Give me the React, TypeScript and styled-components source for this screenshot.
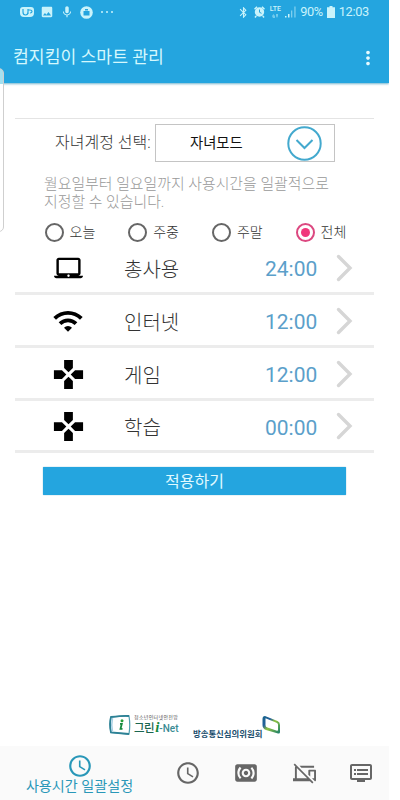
import React from 'react';
import styled, { createGlobalStyle } from 'styled-components';
import {
  MdAccessTime, MdBluetooth, MdDvr, MdGamepad, MdImage, MdLaptopMac, MdMic,
  MdMoreVert, MdPhonelinkOff, MdSurroundSound, MdWifi,
} from 'react-icons/md';

const BLUE = '#24a5df';

const GlobalStyle = createGlobalStyle`
  * { box-sizing: border-box; }
  body { margin: 0; background: #fff; font-family: Roboto, "Noto Sans CJK KR", sans-serif; }
  svg { display: block; flex: none; }
`;

const Page = styled.div`
  position: relative;
  width: 389px;
  height: 800px;
  display: flex;
  flex-direction: column;
  overflow: hidden;
  background: #fff;
`;

const Label = styled.span<{ $size: number; $color: string; $spacing?: number; $weight?: number; $width?: number }>`
  font-size: ${(p) => p.$size}px;
  color: ${(p) => p.$color};
  letter-spacing: ${(p) => p.$spacing ?? 0}px;
  font-weight: ${(p) => p.$weight ?? 400};
  width: ${(p) => (p.$width ? `${p.$width}px` : 'auto')};
  line-height: 1;
  white-space: nowrap;
`;

const Header = styled.header`
  height: 83px;
  flex: none;
  background: ${BLUE};
  box-shadow: 0 1px 2px rgba(40, 140, 180, 0.65);
`;

const StatusBar = styled.div`
  height: 24px;
  display: flex;
  justify-content: space-between;
  padding: 0 20px;
  color: #c9f3fb;
`;

const StatusGroup = styled.div<{ $gap: number }>`
  display: flex;
  align-items: center;
  gap: ${(p) => p.$gap}px;
`;

const NetworkType = styled.div`
  display: flex;
  flex-direction: column;
  align-items: center;
  gap: 1px;
  width: 12px;
`;

const AppBar = styled.div`
  height: 66px;
  display: flex;
  align-items: center;
  justify-content: space-between;
  padding: 2px 10px 0 13px;
`;

const EdgeHandle = styled.div`
  position: absolute;
  left: -6px;
  top: 68px;
  width: 10px;
  height: 164px;
  border: 1px solid #cfcfcf;
  border-radius: 0 5px 5px 0;
  background: linear-gradient(#a5e0ef 0 15px, #fff 15px);
`;

const Content = styled.main`
  flex: 1;
  display: flex;
  flex-direction: column;
  padding: 35px 15px 0;
`;

const Divider = styled.div`
  height: 1px;
  flex: none;
  background: #e4e4e4;
`;

const AccountRow = styled.div`
  display: flex;
  align-items: center;
  height: 38px;
  margin-top: 5px;
  padding-left: 40px;
`;

const Select = styled.button`
  width: 180px;
  height: 38px;
  display: flex;
  align-items: center;
  justify-content: space-between;
  padding: 0 12px 0 34px;
  border: 1px solid #c4c4c4;
  background: #fff;
  font-family: inherit;
`;

const Description = styled.p`
  margin: 13px 0 0 29px;
  height: 36px;
  display: flex;
  flex-direction: column;
  justify-content: space-around;
`;

const RadioGroup = styled.div`
  display: grid;
  grid-template-columns: repeat(4, 83.7px);
  margin: 11px 0 0 29.5px;
  height: 20px;
`;

const RadioItem = styled.div`
  display: flex;
  align-items: center;
  gap: 6px;
`;

const RadioMark = styled.span<{ $on: boolean }>`
  width: 19px;
  height: 19px;
  flex: none;
  border: 2px solid ${(p) => (p.$on ? '#dc4880' : '#666')};
  border-radius: 50%;
  padding: 3px;
  background: ${(p) => (p.$on ? '#f0387c' : '#fff')} content-box;
`;

const UsageList = styled.div`
  display: grid;
  grid-template-rows: 53px 53px 53px 52px;
`;

const UsageRow = styled.div`
  display: grid;
  grid-template-columns: 74px 1fr 53px 56px;
  align-items: center;
  padding: 5px 0 0 35px;
  border-bottom: 3px solid #ececec;
`;

const IconSlot = styled.div`
  width: 36px;
  display: flex;
  justify-content: center;
  margin-top: -3px;
`;

const ArrowSlot = styled.div`
  display: flex;
  padding-left: 17px;
  margin-top: -4px;
`;

const ApplyButton = styled.button`
  width: 303px;
  height: 28px;
  margin: 14px 0 0 28px;
  padding: 2px 0 0;
  border: 0;
  border-radius: 1px;
  box-shadow: 0 0 1px #1780ae;
  background: ${BLUE};
  font-family: inherit;
`;

const Sponsors = styled.footer`
  display: flex;
  height: 24px;
  margin: auto 0 8px 93px;
`;

const GreenText = styled.div`
  display: flex;
  flex-direction: column;
  gap: 1px;
  width: 47px;
  margin: 1px 0 0 3px;
`;

const GreenName = styled.div`
  display: flex;
  align-items: baseline;
  white-space: nowrap;
`;

const Italic = styled.i`
  font: italic 700 15px/12px "Liberation Serif", serif;
  color: #16883e;
  margin-left: 1px;
`;

const Commission = styled.div`
  display: grid;
  grid-template-columns: 68px 19px;
  margin-left: 12px;
  align-items: end;
`;

const CommissionMark = styled.div`
  margin: 0 0 3px 1px;
`;

const BottomNav = styled.nav`
  height: 54px;
  flex: none;
  display: grid;
  grid-template-columns: 159px 58px 58px 58px 56px;
  background: #fafafa;
  color: #666;
`;

const NavItem = styled.div<{ $active?: boolean }>`
  display: flex;
  flex-direction: column;
  align-items: center;
  justify-content: ${(p) => (p.$active ? 'flex-start' : 'center')};
  padding-top: ${(p) => (p.$active ? 7 : 0)}px;
  color: ${(p) => (p.$active ? '#2997b8' : '#666')};
`;

const usage = [
  { name: '총사용', time: '24:00', icon: <MdLaptopMac size={29} /> },
  { name: '인터넷', time: '12:00', icon: <MdWifi size={32} /> },
  { name: '게임', time: '12:00', icon: <MdGamepad size={35} /> },
  { name: '학습', time: '00:00', icon: <MdGamepad size={35} /> },
];

const BadgeIcon = () => (
  <svg width="14" height="12" viewBox="0 0 14 12">
    <path d="M3 1h8q3 0 3 3v3q0 4-4 4H4q-4 0-4-4V4q0-3 3-3Z" fill="currentColor" />
    <path d="M3 3v3q0 3 2.5 3T8 6V3M8 8V4h2q2 0 2 1.5T10 7" fill="none" stroke={BLUE} strokeWidth="1.2" />
  </svg>
);

const RobotIcon = () => (
  <svg width="13" height="13" viewBox="0 0 13 13">
    <circle cx="6.5" cy="6.5" r="6.3" fill="currentColor" />
    <path d="M3.5 5h6v4.5h-6zM5 4.5V3h3v1.5" fill={BLUE} />
  </svg>
);

const AlarmIcon = () => (
  <svg width="11" height="12" viewBox="0 0 11 12">
    <path d="M.5 3.2 3 .8M10.5 3.2 8 .8M2.2 10 1 11.5M8.8 10l1.2 1.5" stroke="currentColor" strokeWidth="1.5" />
    <circle cx="5.5" cy="6" r="4.7" fill="currentColor" />
    <path d="M5.5 3.5v2.8l2 1" stroke={BLUE} fill="none" />
  </svg>
);

const SignalIcon = () => (
  <svg width="11" height="12" viewBox="0 0 11 12" fill="currentColor">
    <path d="M0 10h1.5v1.5H0zM3 8h1.5v3.5H3z" />
    <path d="M6 4.5h1.3v7H6zM9.3.5h1.3v11H9.3z" opacity=".55" />
  </svg>
);

const BatteryIcon = () => (
  <svg width="8" height="12" viewBox="0 0 8 12">
    <path d="M2.5 0h3v1.3H8V12H0V1.3h2.5z" fill="currentColor" />
  </svg>
);

const DropdownIcon = () => (
  <svg width="35" height="35" viewBox="0 0 35 35" fill="none" stroke="#43a9ce">
    <circle cx="17.5" cy="17.5" r="16.2" strokeWidth="2" />
    <path d="m9.5 14 8 8 8-8" strokeWidth="2" />
  </svg>
);

const ArrowIcon = () => (
  <svg width="18" height="28" viewBox="0 0 18 28" fill="none">
    <path d="M3.5 2.5 15 14 3.5 25.5" stroke="#d6d6d6" strokeWidth="3.4" strokeLinecap="round" />
  </svg>
);

const GreenLogo = () => (
  <svg width="23" height="22" viewBox="0 0 23 22">
    <path d="M3 3 21 2Q22.5 11 21 20L3 18.5Q1.5 11 3 3Z" fill="#fff" stroke="#4f9fb0" strokeWidth="1.2" />
    <path d="M21 2Q15 1.5 3 3 1 10 3 18.5l18 1.5" fill="none" stroke="#2d8195" strokeWidth="1.8" />
    <path d="M4.5 4Q3 11 4.5 17.5" fill="none" stroke="#a8d0e4" strokeWidth="1.5" />
    <circle cx="14" cy="6.8" r="1.5" fill="#269d39" />
    <path d="M12 9.8h1.8l-1.3 5h2" fill="none" stroke="#16883e" strokeWidth="1.8" />
  </svg>
);

const CommissionLogo = () => (
  <svg width="19" height="19" viewBox="0 0 19 19">
    <defs>
      <linearGradient id="ribbon" x1="0" y1="0" x2="1" y2="1">
        <stop offset="0" stopColor="#17658a" />
        <stop offset=".3" stopColor="#235f9a" />
        <stop offset=".5" stopColor="#8fc33e" />
        <stop offset="1" stopColor="#167b70" />
      </linearGradient>
    </defs>
    <path
      fillRule="evenodd"
      fill="url(#ribbon)"
      d="M3 0 15.5 5Q18 6 18 9v7q0 2-2 1.5L4 14Q.5 12.500.5 9V3Q.5 0 3 0ZM3.500 2.200V9q0 2 2 2.500l9.500 3.200q1 .3 1-1V8.500q0-1.200-1.500-1.800Z"
    />
  </svg>
);

export default function App() {
  return (
    <Page>
      <GlobalStyle />
      <Header>
        <StatusBar>
          <StatusGroup $gap={6}>
            <BadgeIcon />
            <MdImage size={14} />
            <MdMic size={14} />
            <RobotIcon />
            <svg width="18" height="4" viewBox="0 0 18 4" fill="currentColor">
              <circle cx="3" cy="2" r="1" /><circle cx="8" cy="2" r="1" /><circle cx="13" cy="2" r="1" />
            </svg>
          </StatusGroup>
          <StatusGroup $gap={4}>
            <MdBluetooth size={13} />
            <AlarmIcon />
            <NetworkType>
              <Label $size={7} $color="#c9f3fb" $weight={500}>LTE</Label>
              <svg width="7" height="4" viewBox="0 0 7 4" fill="#71cbed"><path d="m0 2 1.5-2L3 2v2H1zM4 0h2v2L5 4 4 2z" /></svg>
            </NetworkType>
            <SignalIcon />
            <Label $size={12.8} $color="#c9f3fb" $spacing={-0.5}>90%</Label>
            <BatteryIcon />
            <Label $size={12.8} $color="#c9f3fb" $spacing={-0.3}>12:03</Label>
          </StatusGroup>
        </StatusBar>
        <AppBar>
          <Label $size={17.2} $color="#d5f8fd">컴지킴이 스마트 관리</Label>
          <MdMoreVert size={22} color="#e7faff" />
        </AppBar>
      </Header>
      <EdgeHandle />

      <Content>
        <Divider />
        <AccountRow>
          <Label $size={16} $color="#333" $width={100} $weight={300}>자녀계정 선택:</Label>
          <Select>
            <Label $size={14.3} $color="#111">자녀모드</Label>
            <DropdownIcon />
          </Select>
        </AccountRow>
        <Description>
          <Label $size={14.9} $color="#999" $weight={300}>월요일부터 일요일까지 사용시간을 일괄적으로</Label>
          <Label $size={14.9} $color="#999" $weight={300}>지정할 수 있습니다.</Label>
        </Description>
        <RadioGroup>
          {['오늘', '주중', '주말', '전체'].map((name) => (
            <RadioItem key={name}>
              <RadioMark $on={name === '전체'} />
              <Label $size={14} $color="#333" $weight={300}>{name}</Label>
            </RadioItem>
          ))}
        </RadioGroup>
        <UsageList>
          {usage.map((row) => (
            <UsageRow key={row.name}>
              <IconSlot>{row.icon}</IconSlot>
              <Label $size={20} $color="#333" $weight={300}>{row.name}</Label>
              <Label $size={21} $color="#5b9fca">{row.time}</Label>
              <ArrowSlot><ArrowIcon /></ArrowSlot>
            </UsageRow>
          ))}
        </UsageList>
        <ApplyButton>
          <Label $size={16} $color="#e0faff">적용하기</Label>
        </ApplyButton>
        <Sponsors>
          <GreenLogo />
          <GreenText>
            <Label $size={5} $color="#555" $spacing={0.3}>청소년인터넷안전망</Label>
            <GreenName>
              <Label $size={11.5} $color="#1b6650" $weight={500} $spacing={-0.5}>그린</Label>
              <Italic>i</Italic>
              <Label $size={10} $color="#398b94" $weight={500}>-Net</Label>
            </GreenName>
          </GreenText>
          <Commission>
            <Label $size={8.4} $color="#174c6c" $weight={700}>방송통신심의위원회</Label>
            <CommissionMark><CommissionLogo /></CommissionMark>
          </Commission>
        </Sponsors>
      </Content>

      <BottomNav>
        <NavItem $active>
          <MdAccessTime size={26} />
          <Label $size={14.1} $color="#2997b8">사용시간 일괄설정</Label>
        </NavItem>
        <NavItem><MdAccessTime size={26} /></NavItem>
        <NavItem><MdSurroundSound size={26} /></NavItem>
        <NavItem><MdPhonelinkOff size={23} /></NavItem>
        <NavItem><MdDvr size={24} /></NavItem>
      </BottomNav>
    </Page>
  );
}
